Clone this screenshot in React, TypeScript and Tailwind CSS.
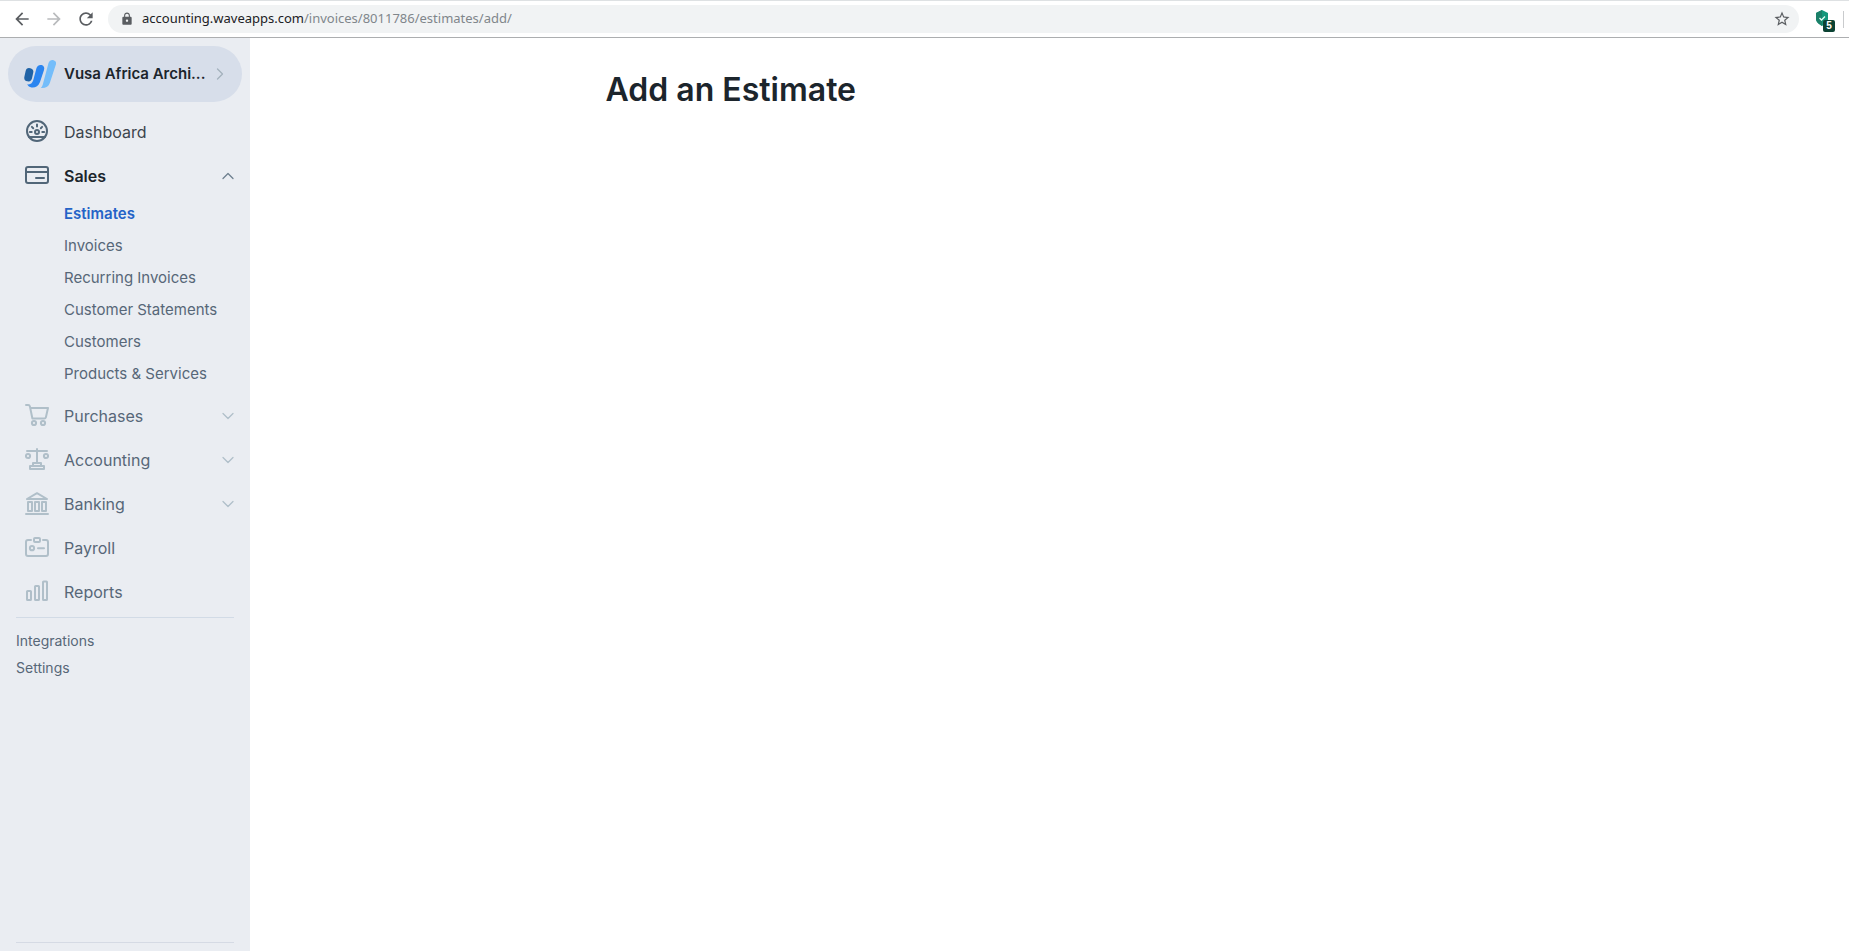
import { useState } from "react";
import type { ReactNode } from "react";
import { ChevronDown, ChevronRight, ChevronUp } from "lucide-react";
import { MdArrowBack, MdArrowForward, MdLock, MdRefresh, MdStarBorder } from "react-icons/md";

type NavItem = {
  label: string;
  icon: ReactNode;
  expandable?: boolean;
};

const SALES_LINKS = [
  "Estimates",
  "Invoices",
  "Recurring Invoices",
  "Customer Statements",
  "Customers",
  "Products & Services",
];

function Icon({ children }: { children: ReactNode }) {
  return (
    <svg
      viewBox="0 0 24 24"
      className="size-6 flex-none"
      fill="none"
      stroke="currentColor"
      strokeWidth="2"
      strokeLinecap="round"
      strokeLinejoin="round"
      aria-hidden="true"
    >
      {children}
    </svg>
  );
}

const DashboardIcon = () => (
  <Icon>
    <circle cx="12" cy="11" r="10" />
    <path d="M4 17h16" />
    <circle cx="12" cy="12" r="2" />
    <path d="M4.9 12h1.8M17.3 12h1.8M12 4.6v1.8M6.9 6.9l1.3 1.3M17.1 6.9l-1.3 1.3" />
  </Icon>
);

const SalesIcon = () => (
  <Icon>
    <rect x="1" y="3" width="22" height="16" rx="2" />
    <path d="M1 8h22M11 14h8" />
  </Icon>
);

const CartIcon = () => (
  <Icon>
    <path d="M1 1h2.2c.9 0 1.5.5 1.7 1.4L7.4 14.5h11.8c.8 0 1.5-.5 1.7-1.3L23 4H5.4" />
    <circle cx="9" cy="19" r="2.1" />
    <circle cx="18" cy="19" r="2.1" />
  </Icon>
);

const ScalesIcon = () => (
  <Icon>
    <path d="M2 3h20M12 1v14" />
    <circle cx="3" cy="8" r="2.1" />
    <circle cx="21" cy="8" r="2.1" />
    <path d="M8 15h8v3H8zM5 18h14v3H5z" />
  </Icon>
);

const BankIcon = () => (
  <Icon>
    <path d="M1 22h22M2 7h20L12 1.2z" />
    <path d="M3 10h4v9H3zM10 10h4v9h-4zM17 10h4v9h-4z" />
  </Icon>
);

const BadgeIcon = () => (
  <Icon>
    <path d="M6 4H3a2 2 0 0 0-2 2v12a2 2 0 0 0 2 2h18a2 2 0 0 0 2-2V6a2 2 0 0 0-2-2h-3" />
    <rect x="9" y="2" width="6" height="4" rx="1" />
    <circle cx="7" cy="12.2" r="2.1" />
    <path d="M13 12.2h6" />
  </Icon>
);

const ReportsIcon = () => (
  <Icon>
    <rect x="2" y="11" width="4" height="9" rx="0.6" />
    <rect x="10" y="6" width="4" height="14" rx="0.6" />
    <rect x="18" y="1.5" width="4" height="18.5" rx="0.6" />
  </Icon>
);

const NAV_ITEMS: NavItem[] = [
  { label: "Purchases", icon: <CartIcon />, expandable: true },
  { label: "Accounting", icon: <ScalesIcon />, expandable: true },
  { label: "Banking", icon: <BankIcon />, expandable: true },
  { label: "Payroll", icon: <BadgeIcon /> },
  { label: "Reports", icon: <ReportsIcon /> },
];

function WaveLogo() {
  return (
    <svg viewBox="0 0 32 28" className="h-7 w-8 flex-none" aria-hidden="true">
      <path d="M5.4 12L4.2 17.5" stroke="#1f62a6" strokeWidth="7.8" strokeLinecap="round" />
      <path
        d="M12.5 8c1-2.500 3-3.600 5.200-2.900 2.300.8 3 2.600 2.300 4.900L16 22c-1.500 4.300-5 6-8.500 5.500-2-.3-3.500-1.500-4.200-3.200 3.500.5 5-1.300 6-4.300z"
        fill="#2b85f0"
      />
      <path
        d="M24.5 3C25.400.6 27.400-.4 29.600.2c2.300.7 2.900 2.400 2.200 4.600L25.800 23c-1.200 3.600-4 5.200-9 4.900 1-.8 1.500-1.900 2-3.300z"
        fill="#74bdfa"
      />
    </svg>
  );
}

function BrowserBar() {
  const [path, setPath] = useState("/invoices/8011786/estimates/add/");
  return (
    <header className="flex h-[38px] flex-none items-center border-t border-b border-t-[#dee1e3] border-b-[#acaeb0] bg-white text-[#5a5d61]">
      <div className="flex items-center gap-3 pr-3 pl-3">
        <button type="button" aria-label="Back">
          <MdArrowBack className="size-5" />
        </button>
        <button type="button" aria-label="Forward" className="text-[#b9bbbd]">
          <MdArrowForward className="size-5" />
        </button>
        <button type="button" aria-label="Reload">
          <MdRefresh className="size-5" />
        </button>
      </div>
      <div className="flex h-7 min-w-0 flex-1 items-center rounded-full bg-[#f1f3f4] pr-2 pl-3">
        <MdLock className="mr-2 size-[14px] flex-none" />
        <label htmlFor="address" className="font-['Noto_Sans',sans-serif] text-[13px] text-[#202124]">
          accounting.waveapps.com
        </label>
        <input
          id="address"
          type="text"
          value={path}
          onChange={(e) => setPath(e.target.value)}
          className="min-w-0 flex-1 bg-transparent font-['Noto_Sans',sans-serif] text-[13px] text-[#80868b] outline-none"
        />
        <button type="button" aria-label="Bookmark this page">
          <MdStarBorder className="size-[18px]" />
        </button>
      </div>
      <button type="button" aria-label="Protection, 5 alerts" className="relative mt-1 mr-2 ml-4 h-[22px] w-5">
        <svg viewBox="0 0 14 16" className="absolute top-0 left-0 h-4 w-[14px]" aria-hidden="true">
          <path d="M7 0l6 3v6c0 3-3 5-6 7-3-2-6-4-6-7V3z" fill="#14977b" />
          <path d="M7 0L1 3v6c0 3 3 5 6 7z" fill="#1b8069" />
          <path d="M4.5 8l2 2L10 6.5" fill="none" stroke="#e8fff8" strokeWidth="1.3" />
        </svg>
        <span className="absolute right-0 bottom-0 flex h-3 w-3 items-center justify-center rounded-[2px] bg-[#0b4233] font-['Liberation_Sans',sans-serif] text-[10px] leading-none font-bold text-white">
          5
        </span>
      </button>
      <span className="mr-[5px] h-[17px] w-px bg-[#c9cbcd]" />
    </header>
  );
}

function Sidebar() {
  const [salesOpen, setSalesOpen] = useState(true);

  return (
    <aside className="flex w-[250px] flex-none flex-col bg-[#eaedf2] pt-2 text-[#576778]">
      <button
        type="button"
        className="mx-2 flex h-14 flex-none items-center justify-between rounded-full bg-[#d7deea] pr-3 pl-4 text-left text-[#1c252c]"
      >
        <span className="flex items-center gap-2">
          <WaveLogo />
          <span className="text-[15px] font-semibold whitespace-nowrap">Vusa Africa Archi...</span>
        </span>
        <ChevronRight className="size-5 flex-none text-[#a3b1bd]" strokeWidth={1.5} />
      </button>

      <nav className="mt-2">
        <a href="#dashboard" className="flex h-11 items-center gap-[15px] pl-[25px] text-[#3c454d]">
          <span className="text-[#516678]">
            <DashboardIcon />
          </span>
          Dashboard
        </a>
        <button
          type="button"
          aria-expanded={salesOpen}
          onClick={() => setSalesOpen(!salesOpen)}
          className="flex h-11 w-full items-center gap-[15px] pr-3 pl-[25px] text-left font-semibold text-[#1c252c]"
        >
          <span className="text-[#516678]">
            <SalesIcon />
          </span>
          <span className="flex-1">Sales</span>
          <ChevronUp className="size-5 text-[#6e7f8e]" strokeWidth={1.5} />
        </button>
        {salesOpen && (
          <ul className="pb-1 text-[15px]">
            {SALES_LINKS.map((label) => (
              <li key={label}>
                <a
                  href="#sales"
                  className={
                    label === "Estimates"
                      ? "flex h-8 items-center pl-16 font-semibold text-[#2463c7]"
                      : "flex h-8 items-center pl-16"
                  }
                >
                  {label}
                </a>
              </li>
            ))}
          </ul>
        )}
        {NAV_ITEMS.map(({ label, icon, expandable }) => (
          <button
            key={label}
            type="button"
            className="flex h-11 w-full items-center gap-[15px] pr-3 pl-[25px] text-left"
          >
            <span className="text-[#b0bfc9]">{icon}</span>
            <span className="flex-1">{label}</span>
            {expandable && <ChevronDown className="size-5 text-[#b0bfc9]" strokeWidth={1.5} />}
          </button>
        ))}
      </nav>

      <hr className="mx-4 mt-[3px] border-[#d2dbe6]" />
      <div className="flex flex-col px-4 pt-[9px] text-sm">
        <a href="#integrations" className="leading-[27px]">
          Integrations
        </a>
        <a href="#settings" className="leading-[27px]">
          Settings
        </a>
      </div>
      <hr className="mx-4 mt-auto mb-2 border-[#d5dae4]" />
    </aside>
  );
}

export default function App() {
  return (
    <div className="flex min-h-screen flex-col bg-white font-['Inter',sans-serif] text-base">
      <BrowserBar />
      <div className="flex flex-1">
        <Sidebar />
        <main className="flex-1 px-6 pt-8">
          <div className="mx-auto max-w-[888px]">
            <h1 className="text-[32px] leading-10 font-semibold text-[#1c252c]">Add an Estimate</h1>
          </div>
        </main>
      </div>
    </div>
  );
}
